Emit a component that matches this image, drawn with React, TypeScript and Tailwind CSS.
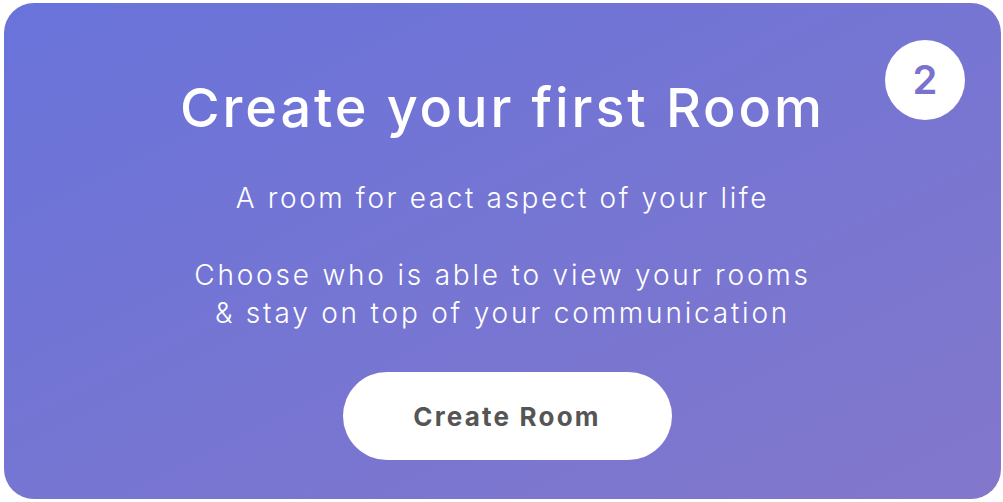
export default function App() {
  return (
    <div className="w-[1003px] h-[502px] bg-white pl-[4px] pr-[2px] pt-[3px] pb-[3px]">
      <div
        className="relative h-full w-full rounded-[30px] bg-gradient-to-br from-[#6973da] to-[#8277cb] flex flex-col items-center text-white"
        style={{ fontFamily: "Inter, 'Noto Sans', sans-serif" }}
      >
        <div className="absolute right-[36px] top-[37px] w-[80px] h-[80px] rounded-full bg-white flex items-center justify-center text-[40px] font-semibold text-[#7a72cc]">
          2
        </div>
        <h1 className="mt-[74px] text-[54px] leading-[62px] font-medium tracking-[2.9px]">
          Create your first Room
        </h1>
        <p className="mt-[40px] text-[28px] leading-[38px] font-light tracking-[2.6px]">
          A room for eact aspect of your life
        </p>
        <p className="mt-[39px] text-[28px] leading-[38px] font-light tracking-[2.8px] text-center">
          Choose who is able to view your rooms
          <br />
          &amp; stay on top of your communication
        </p>
        <button className="mt-[40px] ml-[9px] w-[329px] h-[88px] rounded-full bg-white text-[#555555] text-[26px] font-bold tracking-[2.2px]">
          Create Room
        </button>
      </div>
    </div>
  );
}
